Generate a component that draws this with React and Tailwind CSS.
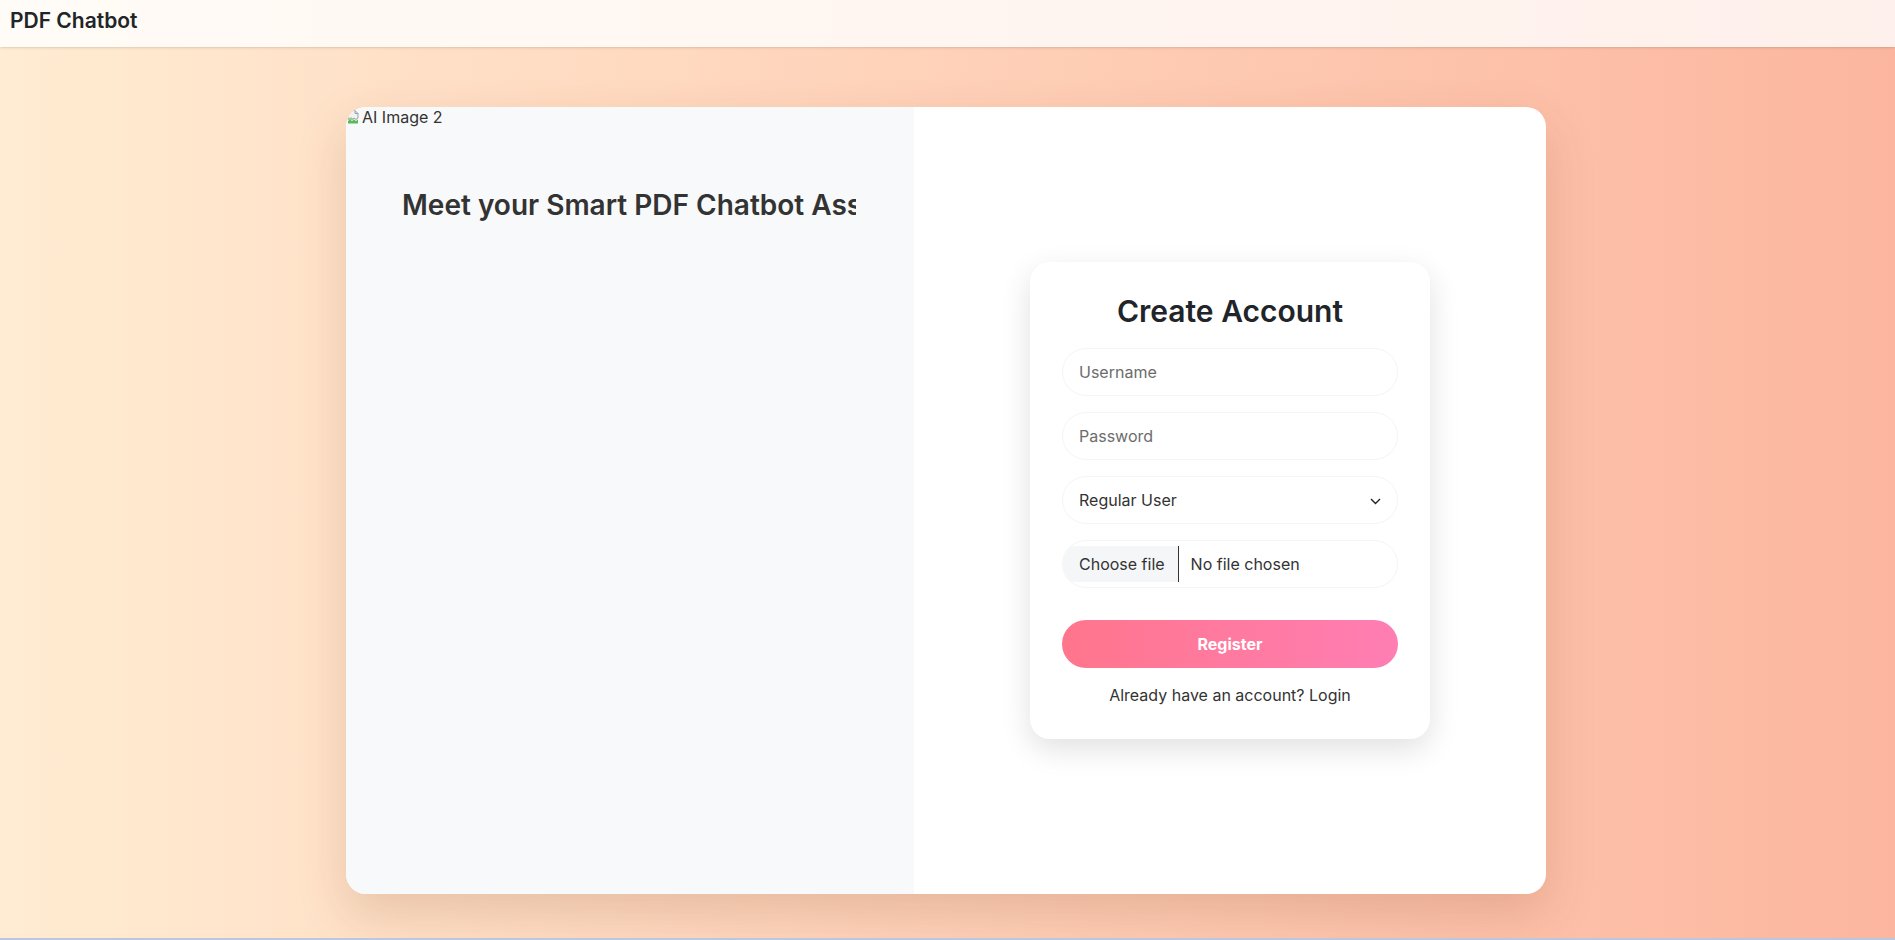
import React from "react";

const font = { fontFamily: "Inter, 'Noto Sans', sans-serif" };

function BrokenImage() {
  return (
    <svg width="16" height="16" viewBox="0 0 16 16" className="shrink-0">
      <path d="M2 1.5h7l3 3v4.5l-2 1.5-2-1.5-2 1.5-2-1.5-2 1.5z" fill="#f2f2f2" stroke="#9aa0a6" strokeWidth="1" />
      <path d="M2 14.5v-2.5l2-1.5 2 1.5 2-1.5 2 1.5 2-1.5v4z" fill="#5cb85c" />
      <path d="M2 11l3-3 3 3z" fill="#8fd08f" />
      <path d="M9 1.5v3h3" fill="none" stroke="#9aa0a6" strokeWidth="1" />
    </svg>
  );
}

function Field({ placeholder, type = "text" }) {
  return (
    <input
      type={type}
      placeholder={placeholder}
      className="w-full h-12 rounded-full border border-[#f5f5f5] bg-white px-4 text-[16px] text-[#333] placeholder:text-[#6c6c6c] outline-none"
    />
  );
}

function RegisterCard() {
  return (
    <div className="w-[400px] rounded-[20px] bg-white px-8 py-8 shadow-[0_10px_30px_rgba(0,0,0,0.12)]">
      <h2 className="text-center text-[30px] leading-[34px] font-semibold text-[#212529] mb-[20px]">
        Create Account
      </h2>
      <div className="flex flex-col gap-4">
        <Field placeholder="Username" />
        <Field placeholder="Password" type="password" />
        <div className="relative w-full h-12 rounded-full border border-[#f5f5f5] bg-white flex items-center px-4 text-[16px] text-[#333]">
          <span>Regular User</span>
          <svg width="11" height="7" viewBox="0 0 11 7" className="absolute right-[16px] top-[21px]">
            <path d="M1 1l4.5 4.5L10 1" fill="none" stroke="#222" strokeWidth="1.4" />
          </svg>
        </div>
        <div className="w-full h-12 rounded-full border border-[#f5f5f5] bg-white flex items-center text-[16px] text-[#333] overflow-hidden">
          <span className="h-9 flex items-center pl-4 pr-[13px] bg-[#f5f6f8] border-r border-[#333]">
            Choose file
          </span>
          <span className="pl-3">No file chosen</span>
        </div>
      </div>
      <button className="mt-8 w-full h-12 rounded-full bg-gradient-to-r from-[#ff758c] to-[#ff7eb3] text-white font-bold text-[16px]">
        Register
      </button>
      <p className="mt-[15px] text-center text-[16px] leading-6 text-[#333]">
        Already have an account? Login
      </p>
    </div>
  );
}

export default function App() {
  return (
    <div style={font} className="min-h-screen bg-gradient-to-r from-[#ffecd2] to-[#fcb69f]">
      <header className="h-[47px] bg-white/80 shadow-sm flex items-center px-[10px] pb-[5px]">
        <span className="text-[21px] font-semibold text-[#212529]">PDF Chatbot</span>
      </header>

      <main className="h-[891px] pt-[60px]">
        <div className="ml-[346px] w-[1200px] h-[787px] flex rounded-[20px] bg-white overflow-hidden shadow-[0_20px_50px_rgba(120,60,30,0.18)]">
          <section className="w-[568px] shrink-0 bg-[#f8f9fa] flex flex-col">
            <div className="flex items-center h-5 text-[16px] text-[#333]">
              <BrokenImage />
              <span>AI Image 2</span>
            </div>
            <div className="pl-14 pr-[58px] mt-[61px]">
              <h1 className="whitespace-nowrap overflow-hidden text-[28px] leading-[34px] font-semibold text-[#333]">
                Meet your Smart PDF Chatbot Assistant
              </h1>
            </div>
          </section>
          <section className="flex-1 flex items-center justify-center">
            <RegisterCard />
          </section>
        </div>
      </main>
      <div className="h-[2px] bg-[#bcc7dd]" />
    </div>
  );
}
